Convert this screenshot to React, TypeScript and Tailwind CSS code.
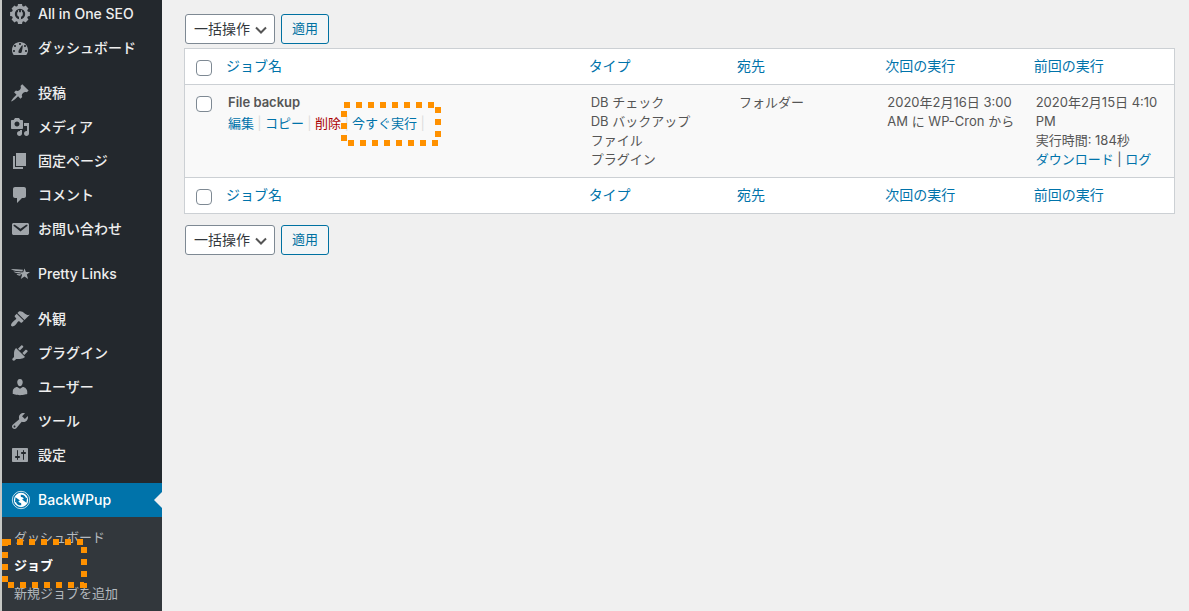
import { useState } from "react";

type MenuItem = {
  label: string;
  icon: React.ReactNode;
};

function Dashicon({ d }: { d: string }) {
  return (
    <svg viewBox="0 0 20 20" className="size-5 fill-current" aria-hidden="true">
      <path fillRule="evenodd" d={d} />
    </svg>
  );
}

function GearIcon() {
  return (
    <svg viewBox="0 0 20 20" className="size-5 fill-current" aria-hidden="true">
      {[0, 45, 90, 135, 180, 225, 270, 315].map((angle) => (
        <path key={angle} d="M7.4 3.2 8 .1h4l.6 3.1z" transform={`rotate(${angle} 10 10)`} />
      ))}
      <circle cx="10" cy="10" r="6.7" fill="none" stroke="currentColor" strokeWidth="3" />
      <path d="M8 6.200h1.100v2h1.800v-2H12v2h.8v2.200c0 1.200-.8 2-1.800 2.200V15.500H9v-2.900c-1-.2-1.800-1-1.800-2.200V8.200H8z" />
    </svg>
  );
}

function PrettyLinksIcon() {
  return (
    <svg viewBox="0 0 20 20" className="size-5 fill-current" aria-hidden="true">
      <path d="M14.500 4.400l1.400 3.500 4.100.100-3.200 2.500 1.300 4.500-3.600-2.500-3.700 2.500 1.300-4.200-2.900-2.400 3.900-.200z" />
      <path d="M.8 5c4 0 8 .2 12.200.8l-.6 1.700C7.800 7.400 3.600 6.900.8 5zM3.500 7.600c2.400.4 4.500.5 6 .5l1.200 1.400C7.800 9.700 5.300 9.200 3.500 7.600zM6.500 10c1.500.2 3 .2 4.300.1l-.3 1.500c-1.600.2-3-.3-4-1.600z" />
    </svg>
  );
}

function BackWPupIcon() {
  return (
    <svg viewBox="0 0 20 20" className="size-5" aria-hidden="true">
      <circle cx="11" cy="10" r="8.700" fill="none" stroke="#fff" strokeOpacity=".75" />
      <circle cx="11" cy="10" r="7.200" fill="#fff" />
      {[0, 180].map((angle) => (
        <g key={angle} transform={`rotate(${angle} 11 10)`}>
          <path d="M10.800 5.900c2.300-.2 3.700 1 4.300 3" fill="none" stroke="#0073aa" strokeWidth="2.400" />
          <path d="M12 9.600l5-1.800-.500 5z" fill="#0073aa" />
        </g>
      ))}
    </svg>
  );
}

const menuGroups: MenuItem[][] = [
  [
    { label: "All in One SEO", icon: <GearIcon /> },
    {
      label: "ダッシュボード",
      icon: (
        <Dashicon d="M3.76 17.01h12.48C17.34 15.63 18 13.9 18 12c0-4.41-3.58-8-8-8s-8 3.59-8 8c0 1.9.66 3.63 1.76 5.01zM9 6c0-.55.45-1 1-1s1 .45 1 1c0 .56-.45 1-1 1s-1-.44-1-1zM4 8c0-.55.45-1 1-1s1 .45 1 1c0 .56-.45 1-1 1s-1-.44-1-1zm4.520 5.400c0-1.200 3.400-6.500 4-6.200.600.300-.500 6.300-.980 7.210-.840.840-2.180.840-3.020 0-.300-.300-.300-.600 0-1.010zM3 13c0-.55.45-1 1-1s1 .45 1 1c0 .56-.45 1-1 1s-1-.44-1-1zm12 0c0-.55.45-1 1-1s1 .45 1 1c0 .56-.45 1-1 1s-1-.44-1-1zm-1-5c0-.55.45-1 1-1s1 .45 1 1c0 .56-.45 1-1 1s-1-.44-1-1z" />
      ),
    },
  ],
  [
    {
      label: "投稿",
      icon: (
        <Dashicon d="M10.44 3.02l1.82-1.82 6.36 6.35-1.83 1.82c-1.05-.68-2.48-.57-3.41.36l-.75.75c-.92.93-1.04 2.35-.35 3.41l-1.83 1.82-2.41-2.41-2.8 2.79c-.42.42-3.38 2.71-3.8 2.29s1.86-3.39 2.28-3.81l2.79-2.79L4.1 9.36l1.83-1.82c1.05.69 2.48.57 3.4-.36l.75-.75c.93-.92 1.05-2.35.36-3.41z" />
      ),
    },
    {
      label: "メディア",
      icon: (
        <Dashicon d="M13 11V4c0-.55-.45-1-1-1h-1.67L9 1H5L3.67 3H2c-.55 0-1 .45-1 1v7c0 .55.45 1 1 1h10c.55 0 1-.45 1-1zM7 4.5c1.38 0 2.5 1.12 2.5 2.5S8.38 9.5 7 9.5 4.5 8.38 4.5 7 5.62 4.5 7 4.5zM14 6h5v10.5c0 1.38-1.12 2.5-2.5 2.5S14 17.88 14 16.5s1.12-2.5 2.5-2.5c.17 0 .34.02.5.05V9h-3V6zm-4 8.05V13h2v3.5c0 1.38-1.12 2.5-2.5 2.5S7 17.88 7 16.5 8.12 14 9.5 14c.17 0 .34.02.5.05z" />
      ),
    },
    { label: "固定ページ", icon: <Dashicon d="M6 15V2h10v13H6zm-1 1h8v2H3V5h2v11z" /> },
    {
      label: "コメント",
      icon: <Dashicon d="M5 2h9c1.1 0 2 .9 2 2v7c0 1.1-.9 2-2 2h-2l-5 5v-5H5c-1.1 0-2-.9-2-2V4c0-1.1.9-2 2-2z" />,
    },
    {
      label: "お問い合わせ",
      icon: (
        <Dashicon d="M3.87 4h13.25C18.37 4 19 4.59 19 5.79v8.42c0 1.19-.63 1.79-1.88 1.79H3.87c-1.25 0-1.88-.6-1.88-1.79V5.79c0-1.2.63-1.79 1.88-1.79zm6.62 8.6l6.74-5.53c.24-.2.43-.66.13-1.07-.29-.41-.82-.42-1.17-.17l-5.7 3.86L4.8 5.83c-.35-.25-.88-.24-1.17.17-.3.41-.11.87.13 1.07z" />
      ),
    },
  ],
  [{ label: "Pretty Links", icon: <PrettyLinksIcon /> }],
  [
    {
      label: "外観",
      icon: (
        <Dashicon d="M14.48 11.06L7.41 3.99l1.5-1.5c.5-.56 2.3-.47 3.51.32 1.21.8 1.43 1.28 2.91 2.1 1.18.64 2.45 1.26 4.45.85zm-.71.71L6.7 4.7 4.93 6.47c-.39.39-.39 1.02 0 1.41l1.06 1.06c.39.39.39 1.03 0 1.42-.6.6-1.43 1.11-2.21 1.69-.35.26-.7.53-1.01.84C1.43 14.23.4 16.08 1.4 17.07c.99 1 2.84-.03 4.18-1.36.31-.31.58-.66.85-1.02.57-.78 1.08-1.61 1.69-2.21.39-.39 1.02-.39 1.41 0l1.06 1.06c.39.39 1.02.39 1.41 0z" />
      ),
    },
    {
      label: "プラグイン",
      icon: (
        <Dashicon d="M13.11 4.36L9.87 7.6 8 5.73l3.24-3.24c.35-.34 1.05-.2 1.56.32.52.51.66 1.21.31 1.55zm-8 1.77l.91-1.12 9.01 9.01-1.19.84c-.71.71-2.63 1.16-3.82 1.16H6.14L4.9 17.26c-.59.59-1.54.59-2.12 0-.59-.58-.59-1.53 0-2.12l1.24-1.24v-3.88c0-1.13.4-3.19 1.09-3.89zm7.26 3.97l3.24-3.24c.34-.35 1.04-.21 1.55.31.52.51.66 1.21.31 1.55l-3.24 3.25z" />
      ),
    },
    {
      label: "ユーザー",
      icon: (
        <Dashicon d="M10 9.25c-2.27 0-2.73-3.44-2.73-3.44C7 4.02 7.82 2 9.97 2c2.16 0 2.98 2.02 2.71 3.81 0 0-.41 3.44-2.68 3.44zm0 2.57L12.72 10c2.39 0 4.52 2.33 4.52 4.53v2.49s-3.65 1.13-7.24 1.13c-3.65 0-7.24-1.13-7.24-1.13v-2.49c0-2.25 1.94-4.48 4.47-4.48z" />
      ),
    },
    {
      label: "ツール",
      icon: (
        <Dashicon d="M16.68 9.77c-1.34 1.34-3.3 1.67-4.95.99l-5.41 6.52c-.99.99-2.59.99-3.58 0s-.99-2.59 0-3.57l6.52-5.42c-.68-1.65-.35-3.61.99-4.95 1.28-1.28 3.12-1.62 4.72-1.06l-2.89 2.89 2.82 2.82 2.86-2.87c.53 1.58.18 3.39-1.08 4.65zM3.81 16.21c.4.39 1.04.39 1.43 0 .4-.4.4-1.04 0-1.43-.39-.4-1.03-.4-1.43 0-.39.39-.39 1.03 0 1.43z" />
      ),
    },
    {
      label: "設定",
      icon: (
        <Dashicon d="M18 16V4c0-.55-.45-1-1-1H3c-.55 0-1 .45-1 1v12c0 .55.45 1 1 1h14c.55 0 1-.45 1-1zM8 11h1c.55 0 1 .45 1 1s-.45 1-1 1H8v1.5c0 .28-.22.5-.5.5s-.5-.22-.5-.5V13H6c-.55 0-1-.45-1-1s.45-1 1-1h1V5.5c0-.28.22-.5.5-.5s.5.22.5.5V11zm5-2h-1c-.55 0-1-.45-1-1s.45-1 1-1h1V5.5c0-.28.22-.5.5-.5s.5.22.5.5V7h1c.55 0 1 .45 1 1s-.45 1-1 1h-1v5.5c0 .28-.22.5-.5.5s-.5-.22-.5-.5V9z" />
      ),
    },
  ],
];

const subMenu: string[] = ["ダッシュボード", "ジョブ", "新規ジョブを追加"];
const columns: string[] = ["タイプ", "宛先", "次回の実行", "前回の実行"];
const jobTypes: string[] = ["DB チェック", "DB バックアップ", "ファイル", "プラグイン"];

// dotted orange frame drawn over the thing to click
function Highlight({ width, height, className }: { width: number; height: number; className: string }) {
  return (
    <svg width={width} height={height} className={`pointer-events-none absolute z-10 max-w-none ${className}`} aria-hidden="true">
      <rect
        x="3"
        y="3"
        width={width - 6}
        height={height - 6}
        fill="none"
        stroke="#ff9100"
        strokeWidth="6"
        strokeDasharray="6"
      />
    </svg>
  );
}

function Sidebar() {
  return (
    <nav className="h-screen w-[162px] shrink-0 overflow-hidden border-l-2 border-[#c6c8c5] bg-[#23282d] text-sm font-medium text-[#eee]">
      <div className="-mt-[3px] flex flex-col gap-[11px]">
        {menuGroups.map((group) => (
          <ul key={group[0].label}>
            {group.map((item) => (
              <li key={item.label}>
                <a href="#" className="flex h-[34px] items-center gap-2 pl-2">
                  <span className="text-[#a0a5aa]">{item.icon}</span>
                  {item.label}
                </a>
              </li>
            ))}
          </ul>
        ))}
        <div>
          <a href="#" className="relative flex h-[34px] items-center gap-2 bg-[#0073aa] pl-2 text-white">
            <BackWPupIcon />
            BackWPup
            <span className="absolute top-[9px] right-0 border-8 border-l-0 border-transparent border-r-[#f0f0f0]"></span>
          </a>
          <ul className="relative bg-[#32373c] py-1.5 text-[13px] font-normal text-[#b4b9be]">
            {subMenu.map((label) => (
              <li key={label}>
                <a href="#" className={`flex h-7 items-center pl-3 ${label === "ジョブ" ? "font-bold text-white" : ""}`}>
                  {label}
                </a>
              </li>
            ))}
            <Highlight width={85} height={49} className="top-[22px] left-0" />
          </ul>
        </div>
      </div>
    </nav>
  );
}

function BulkActions() {
  return (
    <div className="flex gap-1.5 px-px">
      <div className="relative">
        <select
          aria-label="一括操作"
          className="h-[30px] w-[90px] appearance-none rounded-[3px] border border-[#7e8993] bg-white pl-2 text-sm text-[#32373c]"
        >
          <option>一括操作</option>
        </select>
        <svg viewBox="0 0 12 8" className="pointer-events-none absolute top-3 right-2 h-2 w-3" aria-hidden="true">
          <path d="M1 1.500 6 6.500l5-5" fill="none" stroke="#555" strokeWidth="2" />
        </svg>
      </div>
      <button className="h-[30px] w-12 rounded-[3px] border border-[#0071a1] bg-[#f3f5f6] text-[13px] text-[#0071a1]">
        適用
      </button>
    </div>
  );
}

function Check({ label, checked, onChange }: { label: string; checked: boolean; onChange: () => void }) {
  return (
    <input
      type="checkbox"
      aria-label={label}
      checked={checked}
      onChange={onChange}
      className="mt-[11px] ml-[11px] block size-4 appearance-none rounded border border-[#7e8993] bg-white checked:bg-[#0073aa]"
    />
  );
}

function HeadCells() {
  return (
    <>
      <th className="pl-2 font-normal">
        <a href="#">ジョブ名</a>
      </th>
      {columns.map((column) => (
        <th key={column} className="w-[15%] pl-2 font-normal">
          <a href="#">{column}</a>
        </th>
      ))}
    </>
  );
}

function Separator() {
  return <span className="w-[11px] text-center text-[#ddd]">|</span>;
}

export default function App() {
  const [selected, setSelected] = useState(false);
  const toggle = () => setSelected(!selected);

  return (
    <div className="flex min-h-screen bg-[#f0f0f0] font-['Inter','Noto_Sans_CJK_JP',sans-serif] antialiased" lang="ja">
      <Sidebar />
      <main className="min-w-0 flex-1 pt-3.5 pr-3.5 pl-[22px]">
        <BulkActions />
        <div className="mt-1 mb-[11px] border border-[#ccd0d4] bg-white">
          <table className="w-full table-fixed text-left text-[13px] leading-[19px] text-[#555]">
            <thead className="text-sm text-[#0073aa]">
              <tr className="h-[35px] border-b border-[#ccd0d4]">
                <td className="w-[33px] align-top">
                  <Check label="すべて選択" checked={selected} onChange={toggle} />
                </td>
                <HeadCells />
              </tr>
            </thead>
            <tbody>
              <tr className="border-b border-[#ccd0d4] bg-[#f9f9f9] align-top">
                <td>
                  <Check label="File backup を選択" checked={selected} onChange={toggle} />
                </td>
                <td className="py-2 pl-2.5">
                  <strong className="font-semibold">File backup</strong>
                  <div className="mt-0.5 flex text-[#0073aa]">
                    <a href="#">編集</a>
                    <Separator />
                    <a href="#">コピー</a>
                    <Separator />
                    <a href="#" className="text-[#a00]">
                      削除
                    </a>
                    <Separator />
                    <span className="relative">
                      <a href="#">今すぐ実行</a>
                      <Highlight width={100} height={44} className="-top-3 -left-[11px]" />
                    </span>
                    <Separator />
                  </div>
                </td>
                <td className="py-2 pl-2.5">
                  {jobTypes.map((type) => (
                    <p key={type}>{type}</p>
                  ))}
                </td>
                <td className="py-2 pl-2.5">フォルダー</td>
                <td className="py-2 pr-2 pl-2.5">2020年2月16日 3:00 AM に WP-Cron から</td>
                <td className="py-2 pr-2 pl-2.5">
                  <p>2020年2月15日 4:10 PM</p>
                  <p>実行時間: 184秒</p>
                  <p>
                    <a href="#" className="text-[#0073aa]">
                      ダウンロード
                    </a>{" "}
                    |{" "}
                    <a href="#" className="text-[#0073aa]">
                      ログ
                    </a>
                  </p>
                </td>
              </tr>
            </tbody>
            <tfoot className="text-sm text-[#0073aa]">
              <tr className="h-9">
                <td className="align-top">
                  <Check label="すべて選択" checked={selected} onChange={toggle} />
                </td>
                <HeadCells />
              </tr>
            </tfoot>
          </table>
        </div>
        <BulkActions />
      </main>
    </div>
  );
}
